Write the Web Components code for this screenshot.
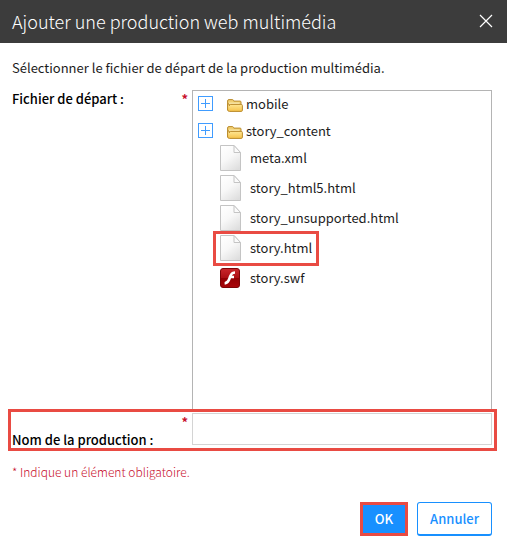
<!DOCTYPE html>
<html lang="fr">
<head>
<meta charset="utf-8">
<meta name="viewport" content="width=device-width, initial-scale=1">
<title>Ajouter une production web multimédia</title>
<style>
    body {
        margin: 0;
        background: #fff;
        color: #1c1c1c;
        font: 13px/18px "Noto Sans CJK SC", "Noto Sans", sans-serif;
        --accent: #1890ff;
        --highlight: #e94b43;
        --required: #c8102e;
    }
</style>
</head>
<body>

<media-dialog>
    <span slot="title">Ajouter une production web multimédia</span>
    <span slot="intro">Sélectionner le fichier de départ de la production multimédia.</span>

    <tree-field label="Fichier de départ :">
        <tree-folder>mobile</tree-folder>
        <tree-folder>story_content</tree-folder>
        <tree-file>meta.xml</tree-file>
        <tree-file>story_html5.html</tree-file>
        <tree-file>story_unsupported.html</tree-file>
        <tree-file highlighted>story.html</tree-file>
        <tree-file type="swf">story.swf</tree-file>
    </tree-field>
    <text-field label="Nom de la production :"></text-field>

    <span slot="note">* Indique un élément obligatoire.</span>
    <dialog-button slot="actions" primary>OK</dialog-button>
    <dialog-button slot="actions">Annuler</dialog-button>
</media-dialog>

<script>
(function () {
    function define(name, html, setup) {
        const template = document.createElement("template")
        template.innerHTML = html

        customElements.define(name, class extends HTMLElement {
            constructor() {
                super()
                this._shadowRoot = this.attachShadow({ mode: "open" })
                this._shadowRoot.appendChild(template.content.cloneNode(true))
            }

            connectedCallback() {
                if (setup) setup(this, this._shadowRoot)
            }
        })
    }

    define("media-dialog", `
        <style>
        :host {
            display: block;
        }
        header {
            display: flex;
            align-items: center;
            justify-content: space-between;
            height: 43px;
            padding: 0 14px 2px 12px;
            box-sizing: border-box;
            background: #3c3c3c;
            color: #fff;
        }
        h1 {
            margin: 0;
            font-size: 18px;
            font-weight: 300;
            line-height: 22px;
        }
        .close {
            display: flex;
            padding: 0;
            border: 0;
            background: none;
            color: inherit;
            cursor: pointer;
        }
        main {
            padding: 16px 15px 0 12px;
        }
        p {
            margin: 0;
        }
        .fields {
            display: flex;
            flex-direction: column;
            margin-top: 13px;
        }
        .note {
            margin-top: 14px;
            color: var(--required);
            font-size: 12px;
            font-weight: 300;
        }
        footer {
            display: flex;
            justify-content: flex-end;
            gap: 9px;
            padding: 21px 15px 5px;
        }
        </style>
        <header>
            <h1><slot name="title"></slot></h1>
            <button class="close" type="button" aria-label="Fermer">
                <svg width="14" height="14" viewBox="0 0 14 14" fill="none" stroke="currentColor" stroke-width="1.2">
                    <path d="M1 1l12 12M13 1L1 13"/>
                </svg>
            </button>
        </header>
        <main>
            <p><slot name="intro"></slot></p>
            <div class="fields"><slot></slot></div>
            <p class="note"><slot name="note"></slot></p>
        </main>
        <footer><slot name="actions"></slot></footer>
    `)

    // both fields share the label column and the required mark
    const fieldStyle = `
        :host {
            display: grid;
            grid-template-columns: 180px minmax(0, 1fr);
            position: relative;
        }
        .caption {
            display: flex;
            justify-content: space-between;
            padding-right: 4px;
            color: #000;
            font-weight: 500;
        }
        .mark {
            color: var(--required);
            font-weight: 700;
        }
    `

    define("tree-field", `
        <style>
        ${fieldStyle}
        .tree {
            box-sizing: border-box;
            min-height: 321px;
            border: 1px solid #b4b4b4;
            background: #fff;
        }
        </style>
        <div class="caption"><span id="caption"></span><span class="mark">*</span></div>
        <div class="tree" role="tree" aria-labelledby="caption"><slot></slot></div>
    `, (el, root) => {
        root.getElementById("caption").textContent = el.getAttribute("label")
    })

    define("text-field", `
        <style>
        ${fieldStyle}
        :host {
            padding-top: 2px;
        }
        :host::after {
            content: "";
            position: absolute;
            inset: -2px -5px -2px -4px;
            border: 3px solid var(--highlight);
            pointer-events: none;
        }
        label {
            align-self: end;
        }
        input {
            box-sizing: border-box;
            width: 100%;
            height: 32px;
            margin: 0 0 4px;
            padding: 0 8px;
            border: 1px solid #d4d4d4;
            background: #fff;
            font: inherit;
        }
        </style>
        <div class="caption">
            <label for="name"></label>
            <span class="mark">*</span>
        </div>
        <input id="name" type="text" required>
    `, (el, root) => {
        root.querySelector("label").textContent = el.getAttribute("label")
    })

    define("tree-folder", `
        <style>
        :host {
            display: flex;
            align-items: center;
            box-sizing: border-box;
            height: 27px;
            padding: 0 0 2px 5px;
        }
        button {
            display: flex;
            margin-right: 14px;
            padding: 0;
            border: 0;
            background: none;
            color: #409cff;
            cursor: pointer;
        }
        .folder {
            margin: 4px 3px 0 0;
        }
        </style>
        <button type="button" aria-label="Développer">
            <svg width="15" height="15" fill="none" stroke="currentColor" shape-rendering="crispEdges">
                <path d="M.5 .5h14v14H.5zM3 7.5h9M7.5 3v9"/>
            </svg>
        </button>
        <svg class="folder" width="16" height="13" viewBox="0 0 16 13">
            <defs>
                <linearGradient id="face" x2="0" y2="1">
                    <stop stop-color="#ffeb9c"/>
                    <stop offset="1" stop-color="#f6c24a"/>
                </linearGradient>
            </defs>
            <path d="M.6 11V2Q.6.6 2 .6h3.4q.8 0 1.2 1l.2.5h6.3q.9 0 .9.9v2" fill="#f0cf72" stroke="#b98a2c"/>
            <path d="M2 4.2h10.500" stroke="#fff5c9"/>
            <path d="M2.5 12.4Q.8 12.4.6 11V4.500q1.800 0 1.800 2.200 0-1.300 1.200-1.300h10.600q1.200 0 1.200 1.200v4.600q0 1.200-1.200 1.200z" fill="url(#face)" stroke="#b98a2c"/>
        </svg>
        <slot></slot>
    `)

    const pageIcon = `
        <svg width="22" height="26" viewBox="0 0 22 26">
            <defs>
                <linearGradient id="page" x1=".2" x2=".8" y2="1">
                    <stop stop-color="#fff"/>
                    <stop offset=".45" stop-color="#f8f8f8"/>
                    <stop offset="1" stop-color="#dedede"/>
                </linearGradient>
            </defs>
            <path d="M.5.5H14l6.5 7v18H.5z" fill="url(#page)" stroke="#c4c4c4"/>
            <path d="M14 .5v7h6.5z" fill="#fafafa" stroke="#c4c4c4"/>
        </svg>`

    const flashIcon = `
        <svg width="22" height="26" viewBox="0 0 22 26">
            <defs>
                <linearGradient id="red" x2="0" y2="1">
                    <stop stop-color="#c9262b"/>
                    <stop offset=".48" stop-color="#ad1015"/>
                    <stop offset=".52" stop-color="#920004"/>
                    <stop offset="1" stop-color="#aa0509"/>
                </linearGradient>
            </defs>
            <rect x=".5" y="3.5" width="19" height="19" rx="2.5" fill="url(#red)" stroke="#7d0508"/>
            <path d="M15 6.2v2.6c-1.7.1-2.5.8-3 2h2v2.4h-3c-1.2 3.7-2.8 6.2-6.4 6.4v-2.7c2-.3 3-2 3.9-4.6 1.2-3.5 2.7-6 6.5-6.1z" fill="#fff"/>
        </svg>`

    define("tree-file", `
        <style>
        :host {
            display: flex;
            align-items: center;
            width: fit-content;
            position: relative;
            height: 26px;
            margin-bottom: 4px;
            padding-left: 27px;
        }
        :host([highlighted])::after {
            content: "";
            position: absolute;
            inset: -4px -7px -5px 20px;
            border: 3px solid var(--highlight);
        }
        .icon {
            display: flex;
            margin-right: 8px;
        }
        </style>
        <span class="icon"></span>
        <slot></slot>
    `, (el, root) => {
        root.querySelector(".icon").innerHTML = el.getAttribute("type") === "swf" ? flashIcon : pageIcon
    })

    define("dialog-button", `
        <style>
        :host {
            display: block;
        }
        button {
            height: 34px;
            padding: 0 12px;
            border: 1px solid var(--accent);
            border-bottom-width: 2px;
            border-radius: 3px;
            background: #fff;
            color: var(--accent);
            font: inherit;
            font-weight: 500;
            cursor: pointer;
        }
        :host([primary]) button {
            border: 3px solid var(--highlight);
            border-radius: 0;
            background: var(--accent);
            color: #fff;
        }
        </style>
        <button type="button"><slot></slot></button>
    `)
})()
</script>
</body>
</html>
